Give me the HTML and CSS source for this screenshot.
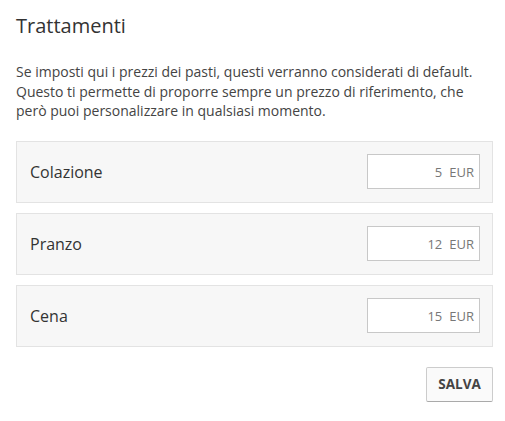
FILE: index.html
```html
<!DOCTYPE html>
<html lang="it">
<head>
<meta charset="utf-8">
<link rel="stylesheet" href="styles.css">
</head>
<body>
<div class="page">
  <h1 class="title">Trattamenti</h1>
  <p class="intro">Se imposti qui i prezzi dei pasti, questi verranno considerati di default. Questo ti permette di proporre sempre un prezzo di riferimento, che però puoi personalizzare in qualsiasi momento.</p>
  <div class="rows">
    <div class="row">
      <span class="label">Colazione</span>
      <div class="price"><span class="num">5</span><span class="cur">EUR</span></div>
    </div>
    <div class="row">
      <span class="label">Pranzo</span>
      <div class="price"><span class="num">12</span><span class="cur">EUR</span></div>
    </div>
    <div class="row">
      <span class="label">Cena</span>
      <div class="price"><span class="num">15</span><span class="cur">EUR</span></div>
    </div>
  </div>
  <div class="actions">
    <button class="btn">SALVA</button>
  </div>
</div>
</body>
</html>
```

FILE: styles.css
```css
* { box-sizing: border-box; }
html, body { margin: 0; padding: 0; background: #fff; }
body { font-family: "Open Sans", "DejaVu Sans", sans-serif; color: #333; }
.page { padding: 12px 12px 0 16px; }
.title { margin: 0; font-size: 20px; font-weight: 400; line-height: 28px; color: #333; }
.intro { margin: 22px 0 0; font-size: 14px; line-height: 19.5px; color: #444; width: 470px; }
.rows { margin-top: 20px; display: flex; flex-direction: column; gap: 10px; width: 477px; }
.row { height: 62px; background: #f7f7f7; border: 1px solid #e3e3e3; display: flex; align-items: center; justify-content: space-between; padding: 0 12px 0 13px; }
.label { font-size: 16px; color: #333; }
.price { width: 113px; height: 35px; background: #fff; border: 1px solid #c8c8c8; display: flex; align-items: center; justify-content: flex-end; padding-right: 5px; font-size: 13px; color: #777; gap: 7px; }
.actions { display: flex; justify-content: flex-end; width: 477px; margin-top: 20px; }
.btn { width: 67px; height: 35px; background: #fafafa; border: 1px solid #ccc; border-bottom-color: #aaa; border-radius: 2px; font-family: "Open Sans", sans-serif; font-weight: 700; font-size: 13.5px; color: #444; padding: 0; }
```
